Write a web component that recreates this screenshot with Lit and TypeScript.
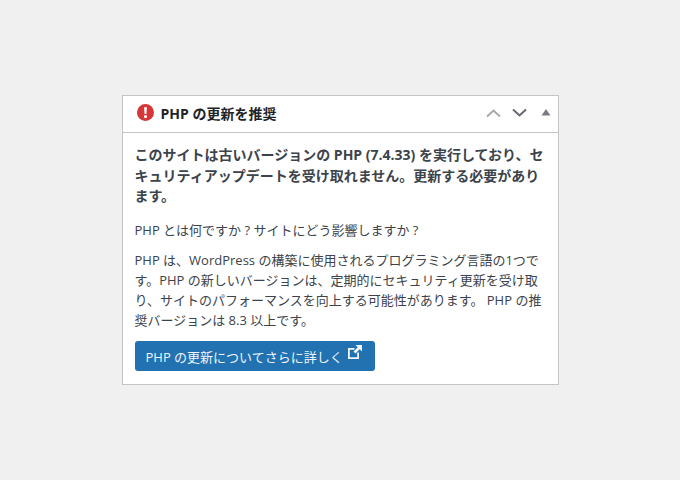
import { css, html, LitElement } from "lit";
import { customElement } from "lit/decorators.js";

@customElement("app-root")
export class AppRoot extends LitElement {
  static styles = css`
    :host {
      display: flex;
      justify-content: center;
      align-items: flex-start;
      width: 680px;
      height: 480px;
      box-sizing: border-box;
      padding-top: 95px;
      background: #f0f0f1;
      font-family: "Open Sans", "Noto Sans CJK JP", sans-serif;
      color: #3c434a;
      font-size: 13px;
      line-height: 20px;
    }
    .card {
      width: 437px;
      height: 290px;
      box-sizing: border-box;
      background: #fff;
      border: 1px solid #c3c4c7;
    }
    .head {
      display: flex;
      align-items: center;
      height: 36px;
      border-bottom: 1px solid #c3c4c7;
      padding: 0 7px 0 14px;
      gap: 7px;
    }
    .head h2 {
      flex: 1;
      margin: 0;
      font-size: 14px;
      font-weight: 700;
      color: #1d2327;
    }
    .alert {
      width: 17px;
      height: 17px;
      margin-bottom: 4px;
    }
    .ctl {
      display: flex;
      align-items: center;
      gap: 11px;
      margin-bottom: 2px;
    }
    .ctl .tri {
      margin-left: 3px;
      margin-bottom: 2px;
    }
    .body {
      padding: 12px 12px 0;
    }
    p {
      margin: 0 0 10px;
    }
    .lead {
      font-size: 14px;
      font-weight: 700;
      line-height: 20.5px;
      margin-bottom: 13px;
    }
    .btn {
      display: inline-flex;
      align-items: center;
      gap: 4px;
      height: 30px;
      box-sizing: border-box;
      margin-top: 1px;
      padding: 3px 12px 0 11px;
      background: #2271b1;
      border-radius: 3px;
      color: #f0f6fc;
      text-decoration: none;
    }
    .ext {
      align-self: flex-start;
    }
  `;

  protected render() {
    return html`
      <div class="card">
        <div class="head">
          <svg class="alert" viewBox="0 0 18 18">
            <circle cx="9" cy="9" r="9" fill="#d63638"></circle>
            <path d="M7.500 3.400h3l-.5 7.200H8z M9 11.600a1.700 1.700 0 1 1 0 3.400a1.700 1.700 0 0 1 0-3.400z" fill="#fff"></path>
          </svg>
          <h2>PHP の更新を推奨</h2>
          <div class="ctl">
            <svg width="15" height="10" viewBox="0 0 15 10">
              <path d="M1 8.500l6.500-6l6.500 6" fill="none" stroke="#a7aaad" stroke-width="2"></path>
            </svg>
            <svg width="15" height="10" viewBox="0 0 15 10">
              <path d="M1 1.500l6.500 6l6.500-6" fill="none" stroke="#646970" stroke-width="2"></path>
            </svg>
            <svg class="tri" width="10" height="7" viewBox="0 0 10 7">
              <path d="M5 0l4.500 6.500h-9z" fill="#787c82"></path>
            </svg>
          </div>
        </div>
        <div class="body">
          <p class="lead">このサイトは古いバージョンの PHP (7.4.33) を実行しており、セキュリティアップデートを受け取れません。更新する必要があります。</p>
          <p>PHP とは何ですか ? サイトにどう影響しますか ?</p>
          <p>PHP は、WordPress の構築に使用されるプログラミング言語の1つです。PHP の新しいバージョンは、定期的にセキュリティ更新を受け取り、サイトのパフォーマンスを向上する可能性があります。 PHP の推奨バージョンは 8.3 以上です。</p>
          <a class="btn" href="#">
            <span>PHP の更新についてさらに詳しく</span>
            <svg class="ext" width="16" height="16" viewBox="0 0 16 16">
              <path fill-rule="evenodd" d="M1 4h6.500v1.800H2.800v7.400h7.400V8.500H12V15H1z" fill="#f0f6fc"></path>
              <path d="M8.500 1h6.500v6.500l-2.300-2.300-4.300 4.300-1.900-1.900 4.300-4.300z" fill="#f0f6fc"></path>
            </svg>
          </a>
        </div>
      </div>
    `;
  }
}
